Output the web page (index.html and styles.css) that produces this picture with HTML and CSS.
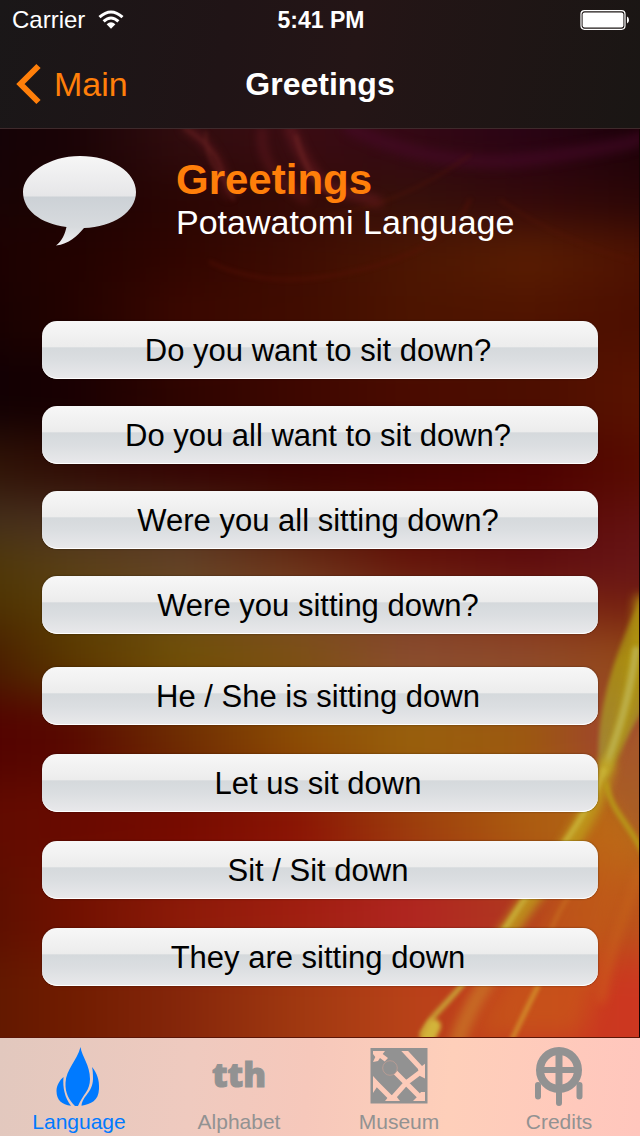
FILE: index.html
```html
<!DOCTYPE html>
<html lang="en">
<head>
<meta charset="utf-8">
<meta name="viewport" content="width=device-width, initial-scale=1">
<title>Greetings</title>
<link rel="stylesheet" href="styles.css">
</head>
<body>
<div class="app">
  <svg class="backdrop" viewBox="0 0 640 1136" preserveAspectRatio="none" aria-hidden="true">
    <defs>
      <filter id="rows" x="0" y="0" width="1" height="1" color-interpolation-filters="sRGB"><feGaussianBlur stdDeviation="14 22"/></filter>
      <filter id="b2" filterUnits="userSpaceOnUse" x="-40" y="-40" width="720" height="1216" color-interpolation-filters="sRGB"><feGaussianBlur stdDeviation="2"/></filter>
      <filter id="b4" filterUnits="userSpaceOnUse" x="-40" y="-40" width="720" height="1216" color-interpolation-filters="sRGB"><feGaussianBlur stdDeviation="5"/></filter>
      <filter id="b12" filterUnits="userSpaceOnUse" x="-40" y="-40" width="720" height="1216" color-interpolation-filters="sRGB"><feGaussianBlur stdDeviation="12"/></filter>
      <linearGradient id="r1"><stop offset="0" stop-color="#120307"/><stop offset=".16" stop-color="#1a0306"/><stop offset=".31" stop-color="#300c0e"/><stop offset=".47" stop-color="#3a0c12"/><stop offset=".62" stop-color="#340814"/><stop offset=".78" stop-color="#2a0414"/><stop offset="1" stop-color="#180004"/></linearGradient>
      <linearGradient id="r2"><stop offset="0" stop-color="#160304"/><stop offset=".16" stop-color="#1c0303"/><stop offset=".31" stop-color="#2a0503"/><stop offset=".47" stop-color="#330a06"/><stop offset=".62" stop-color="#35100a"/><stop offset=".78" stop-color="#32080a"/><stop offset="1" stop-color="#270505"/></linearGradient>
      <linearGradient id="r3"><stop offset="0" stop-color="#1a0102"/><stop offset=".16" stop-color="#220200"/><stop offset=".31" stop-color="#300500"/><stop offset=".47" stop-color="#3e0c02"/><stop offset=".62" stop-color="#4c1602"/><stop offset=".78" stop-color="#5a1e02"/><stop offset="1" stop-color="#4a0e02"/></linearGradient>
      <linearGradient id="r4"><stop offset="0" stop-color="#140102"/><stop offset=".16" stop-color="#220200"/><stop offset=".31" stop-color="#3a0700"/><stop offset=".47" stop-color="#400c00"/><stop offset=".62" stop-color="#4c1400"/><stop offset=".78" stop-color="#501400"/><stop offset="1" stop-color="#4a0c00"/></linearGradient>
      <linearGradient id="r5"><stop offset="0" stop-color="#0d0003"/><stop offset=".16" stop-color="#180002"/><stop offset=".31" stop-color="#2e0400"/><stop offset=".47" stop-color="#3e0700"/><stop offset=".62" stop-color="#4a0b00"/><stop offset=".78" stop-color="#4c0e00"/><stop offset="1" stop-color="#5e1400"/></linearGradient>
      <linearGradient id="r6"><stop offset="0" stop-color="#301808"/><stop offset=".16" stop-color="#300c04"/><stop offset=".31" stop-color="#340202"/><stop offset=".47" stop-color="#380000"/><stop offset=".62" stop-color="#400000"/><stop offset=".78" stop-color="#4a0000"/><stop offset="1" stop-color="#5e1000"/></linearGradient>
      <linearGradient id="r7"><stop offset="0" stop-color="#42301c"/><stop offset=".16" stop-color="#4a3020"/><stop offset=".31" stop-color="#50301a"/><stop offset=".47" stop-color="#4c1808"/><stop offset=".62" stop-color="#580c04"/><stop offset=".78" stop-color="#5a0804"/><stop offset="1" stop-color="#661414"/></linearGradient>
      <linearGradient id="r8"><stop offset="0" stop-color="#4a3400"/><stop offset=".16" stop-color="#5a4018"/><stop offset=".31" stop-color="#64432a"/><stop offset=".47" stop-color="#6c3018"/><stop offset=".62" stop-color="#66140a"/><stop offset=".78" stop-color="#5e0c10"/><stop offset="1" stop-color="#6c1a1a"/></linearGradient>
      <linearGradient id="r9"><stop offset="0" stop-color="#482c00"/><stop offset=".16" stop-color="#5a3e04"/><stop offset=".31" stop-color="#6a4a18"/><stop offset=".47" stop-color="#7a4a28"/><stop offset=".62" stop-color="#7a3c20"/><stop offset=".78" stop-color="#802c10"/><stop offset="1" stop-color="#701810"/></linearGradient>
      <linearGradient id="r10"><stop offset="0" stop-color="#401000"/><stop offset=".16" stop-color="#5a3800"/><stop offset=".31" stop-color="#705006"/><stop offset=".47" stop-color="#7c5014"/><stop offset=".62" stop-color="#8a4c30"/><stop offset=".78" stop-color="#8e4a2c"/><stop offset="1" stop-color="#98480c"/></linearGradient>
      <linearGradient id="r11"><stop offset="0" stop-color="#500000"/><stop offset=".16" stop-color="#580800"/><stop offset=".31" stop-color="#6e2c02"/><stop offset=".47" stop-color="#8c4c04"/><stop offset=".62" stop-color="#98600c"/><stop offset=".78" stop-color="#9c5810"/><stop offset=".92" stop-color="#a04034"/><stop offset="1" stop-color="#8c6030"/></linearGradient>
      <linearGradient id="r12"><stop offset="0" stop-color="#5e0c00"/><stop offset=".16" stop-color="#680a00"/><stop offset=".31" stop-color="#760a00"/><stop offset=".47" stop-color="#8a1404"/><stop offset=".62" stop-color="#9c3c0c"/><stop offset=".78" stop-color="#ac5c10"/><stop offset="1" stop-color="#b87020"/></linearGradient>
      <linearGradient id="r13"><stop offset="0" stop-color="#520f00"/><stop offset=".16" stop-color="#701000"/><stop offset=".31" stop-color="#8c1a08"/><stop offset=".47" stop-color="#a01e10"/><stop offset=".62" stop-color="#b02420"/><stop offset=".78" stop-color="#b03820"/><stop offset="1" stop-color="#c06018"/></linearGradient>
      <linearGradient id="r14"><stop offset="0" stop-color="#5a1600"/><stop offset=".16" stop-color="#701c00"/><stop offset=".31" stop-color="#85260a"/><stop offset=".47" stop-color="#a03810"/><stop offset=".62" stop-color="#b84218"/><stop offset=".78" stop-color="#c63c20"/><stop offset="1" stop-color="#d03420"/></linearGradient>
      <linearGradient id="tongue" x1="0" y1="0" x2="0" y2="1"><stop offset="0" stop-color="#8a5a10" stop-opacity=".7"/><stop offset=".45" stop-color="#a88a14"/><stop offset="1" stop-color="#a08040"/></linearGradient>
    </defs>
    <g filter="url(#rows)">
      <rect x="-50" y="-50" width="740" height="225" fill="url(#r1)"/>
      <rect x="-50" y="170" width="740" height="60" fill="url(#r2)"/>
      <rect x="-50" y="228" width="740" height="56" fill="url(#r3)"/>
      <rect x="-50" y="282" width="740" height="72" fill="url(#r4)"/>
      <rect x="-50" y="352" width="740" height="85" fill="url(#r5)"/>
      <rect x="-50" y="435" width="740" height="64" fill="url(#r6)"/>
      <rect x="-50" y="497" width="740" height="47" fill="url(#r7)"/>
      <rect x="-50" y="542" width="740" height="48" fill="url(#r8)"/>
      <rect x="-50" y="588" width="740" height="44" fill="url(#r9)"/>
      <rect x="-50" y="630" width="740" height="66" fill="url(#r10)"/>
      <rect x="-50" y="694" width="740" height="90" fill="url(#r11)"/>
      <rect x="-50" y="782" width="740" height="87" fill="url(#r12)"/>
      <rect x="-50" y="867" width="740" height="90" fill="url(#r13)"/>
      <rect x="-50" y="955" width="740" height="240" fill="url(#r14)"/>
    </g>
    <g fill="none" stroke-linecap="round">
      <g filter="url(#b4)" stroke="#7a2028" opacity=".5">
        <path d="M186 128q36 22 42 66" stroke-width="7"/>
        <path d="M290 128q22 56 46 62t42 12" stroke-width="10"/>
        <path d="M350 128q90 44 190 30t100-20" stroke="#4a0a2c" stroke-width="14"/>
        <path d="M262 130q-4 40 44 70" stroke-width="6"/>
      </g>
      <g filter="url(#b2)" stroke="#7c2c28" opacity=".55">
        <path d="M184 128q30 18 36 38t14 34" stroke-width="2"/>
        <path d="M206 132q-2 36 34 62" stroke-width="2"/>
        <path d="M296 136q14 52 38 58" stroke-width="3"/>
        <path d="M330 215q70-10 140-60M500 200q60 40 130 60" stroke="#5a1808" stroke-width="2"/>
        <path d="M210 262q60 30 150 8t110-70" stroke="#5a1206" stroke-width="3"/>
      </g>
    </g>
    <path d="M660 560C618 640 603 690 599 735C597 760 600 775 605 785C618 760 632 720 660 690Z" fill="url(#tongue)" filter="url(#b2)"/>
    <path d="M660 690C632 730 612 770 608 792C615 812 628 826 660 856Z" fill="#a85c28" opacity=".8" filter="url(#b4)"/>
    <path d="M604 784C580 850 530 930 470 1037H580C600 980 630 900 640 850C622 826 610 808 604 784Z" fill="#c86a14" opacity=".45" filter="url(#b12)"/>
    <g fill="none" stroke-linecap="round">
      <path d="M640 600C636 660 632 710 608 765" stroke="#b8a010" stroke-width="12" opacity=".7" filter="url(#b4)"/>
      <path d="M636 650C628 710 612 748 604 772" stroke="#bcae48" stroke-width="7" filter="url(#b2)"/>
      <path d="M606 768C598 800 574 842 542 884S505 940 478 972" stroke="#c0a01c" stroke-width="18" opacity=".8" filter="url(#b4)"/>
      <path d="M604 770C594 802 570 836 538 880S500 940 470 976S434 1012 422 1034" stroke="#ccb83c" stroke-width="5" opacity=".85" filter="url(#b2)"/>
      <path d="M494 970C478 996 466 1014 458 1040" stroke="#ca7a28" stroke-width="16" opacity=".7" filter="url(#b4)"/>
      <path d="M434 1026L422 1050" stroke="#d2b43a" stroke-width="14" filter="url(#b2)"/>
      <path d="M606 784C612 812 624 816 644 854" stroke="#b89a18" stroke-width="5" filter="url(#b2)"/>
      <path d="M538 986Q524 1014 508 1048" stroke="#d4922c" stroke-width="4" filter="url(#b2)"/>
      <path d="M640 870C624 920 608 950 602 1000" stroke="#d0701c" stroke-width="6" opacity=".5" filter="url(#b4)"/>
      <path d="M572 892Q558 910 548 938" stroke="#cc7a24" stroke-width="4" opacity=".5" filter="url(#b2)"/>
    </g>
    <rect x="639" y="128" width="1" height="910" fill="#140404"/>
  </svg>

  <header class="topbar">
    <div class="status">
      <div class="status-left">
        <span>Carrier</span>
        <svg class="wifi" viewBox="0 0 26 20" aria-hidden="true"><g fill="none" stroke="#fff" stroke-width="3"><path d="M1.5 7.2Q13-3.2 24.500 7.200"/><path d="M5.600 11.400Q13 4.600 20.400 11.400"/></g><path d="M8.600 14.200Q13 10.400 17.400 14.200L13 18.800Z" fill="#fff"/></svg>
      </div>
      <span class="clock">5:41 PM</span>
      <div class="status-right">
        <svg class="battery" viewBox="0 0 50 20" role="img" aria-label="Battery full"><rect x="1" y=".7" width="44" height="18.600" rx="3.500" fill="none" stroke="#fff" stroke-width="1.200"/><rect x="2.600" y="2.400" width="40.800" height="15.200" rx="2" fill="#fff"/><path d="M47 6.500q2 .5 2 3.500t-2 3.500z" fill="#fff"/></svg>
      </div>
    </div>
    <nav class="navbar">
      <a class="back" href="#main">
        <svg class="chevron" viewBox="0 0 26 42" aria-hidden="true"><path d="M22.500 3L4.500 21l18 18" fill="none" stroke="#ff7f0a" stroke-width="6"/></svg>
        <span>Main</span>
      </a>
      <span class="nav-title">Greetings</span>
    </nav>
  </header>

  <main class="content">
    <section class="intro">
      <svg class="bubble" viewBox="0 0 114 90" aria-hidden="true">
        <defs><linearGradient id="gloss" x1="0" y1="0" x2="0" y2="1"><stop offset="0" stop-color="#f6f6f6"/><stop offset=".45" stop-color="#e6e6e8"/><stop offset=".455" stop-color="#ccd1d6"/><stop offset=".8" stop-color="#d8dbde"/><stop offset="1" stop-color="#f0f0f2"/></linearGradient></defs>
        <path d="M57 0C88.500 0 113 16 113 36S90 71 61 72C54 80 46 88 33 89.500C39 85 42 78 43.500 71C17 67.500 0 54 0 36S25.500 0 57 0Z" fill="url(#gloss)"/>
      </svg>
      <div class="intro-text">
        <h1>Greetings</h1>
        <p>Potawatomi Language</p>
      </div>
    </section>
    <section class="phrases">
      <ul class="phrase-list">
        <li><button class="phrase" type="button">Do you want to sit down?</button></li>
        <li><button class="phrase" type="button">Do you all want to sit down?</button></li>
        <li><button class="phrase" type="button">Were you all sitting down?</button></li>
        <li><button class="phrase" type="button">Were you sitting down?</button></li>
      </ul>
      <ul class="phrase-list loose">
        <li><button class="phrase" type="button">He / She is sitting down</button></li>
        <li><button class="phrase" type="button">Let us sit down</button></li>
        <li><button class="phrase" type="button">Sit / Sit down</button></li>
        <li><button class="phrase" type="button">They are sitting down</button></li>
      </ul>
    </section>
  </main>

  <nav class="tabbar" aria-label="Sections">
    <a class="tab active" href="#language" aria-current="page">
      <svg class="tab-icon" viewBox="0 0 60 60" aria-hidden="true"><g fill="currentColor"><path d="M31.500 0C33 10 41 18 41 32C41 44 34 47 29 59H26C20 53 16 46 16.500 36C17 22 28 14 31.500 0Z"/><path d="M14.500 30C13.500 41 16 51 22 58.700C13 58 7.500 53 7.500 44C7.500 38 11 33 14.500 30Z"/><path d="M43 20C48 26 50.500 33 50 42C49.500 54 42 57 32.500 58.700C34 48 43.500 46 44 32C44 27 43.800 23 43 20Z"/></g></svg>
      <span>Language</span>
    </a>
    <a class="tab" href="#alphabet">
      <span class="tab-icon glyphs" aria-hidden="true">tth</span>
      <span>Alphabet</span>
    </a>
    <a class="tab" href="#museum">
      <svg class="tab-icon" viewBox="0 0 60 60" aria-hidden="true"><path d="M1.500 1h57v55.500h-57z" fill="currentColor"/><svg x="4" y="4" width="52" height="50" viewBox="4 4 52 50"><g fill="none" stroke="#fdcbb9" stroke-width="5"><path d="M32 0L58 28M53 24L37 36L22 53M22 21L58 57M2 31L24 53"/></g><g fill="#fdcbb9"><path d="M4 4H16L13.700 7L19 11L15.700 14.500L11 11L9 14L4 15L6.300 10L4 7Z"/><path d="M57 16V32L51 29L49 22Z"/><path d="M16 54H31L27 49H20Z"/><path d="M4 29V46L8 40L11 37Z"/><path d="M57 45V54H44L48 50L52 45Z"/></g></svg><circle cx="21" cy="21" r="7.300" fill="currentColor" stroke="#b79c94" stroke-width="1"/></svg>
      <span>Museum</span>
    </a>
    <a class="tab" href="#credits">
      <svg class="tab-icon" viewBox="0 0 60 60" aria-hidden="true"><g fill="none" stroke="currentColor"><circle cx="30" cy="23" r="19" stroke-width="8"/><path d="M30 4v38" stroke-width="7"/><path d="M11 23h38" stroke-width="6"/><path d="M30 40v16M9 38v11.500M50.500 38v11.500" stroke-width="6" stroke-linecap="round"/></g></svg>
      <span>Credits</span>
    </a>
  </nav>
</div>
</body>
</html>
```
FILE: styles.css
```css
* {
  box-sizing: border-box;
}

body {
  margin: 0;
  font-family: "Liberation Sans", Arial, sans-serif;
  color: #fff;
  background: #2a0402;
}

.app {
  position: relative;
  isolation: isolate;
  display: flex;
  flex-direction: column;
  min-height: 100vh;
}

.backdrop {
  position: absolute;
  inset: 0;
  z-index: -1;
  width: 100%;
  height: 100%;
}

.topbar {
  background: linear-gradient(100deg, #1a1718 0%, #201416 35%, #241516 55%, #1a1614 100%);
  border-bottom: 1px solid #3f2a2c;
}

.status {
  display: grid;
  grid-template-columns: 1fr auto 1fr;
  align-items: center;
  height: 40px;
  padding: 0 10px 0 12px;
  font-size: 24px;
}

.status-left {
  display: flex;
  align-items: center;
  gap: 13px;
}

.wifi {
  width: 26px;
  height: 20px;
}

.clock {
  font-size: 23px;
  font-weight: bold;
}

.status-right {
  display: flex;
  justify-content: flex-end;
}

.battery {
  width: 50px;
  height: 20px;
}

.navbar {
  display: grid;
  grid-template-columns: 1fr auto 1fr;
  align-items: center;
  height: 88px;
  padding: 0 16px;
}

.back {
  display: flex;
  align-items: center;
  gap: 12px;
  font-size: 34px;
  color: #ff7f0a;
  text-decoration: none;
}

.chevron {
  width: 26px;
  height: 42px;
}

.nav-title {
  font-size: 32px;
  font-weight: bold;
}

.content {
  flex: 1;
}

.intro {
  display: flex;
  gap: 39px;
  padding: 27px 23px 0;
}

.bubble {
  flex: none;
  width: 114px;
  height: 90px;
}

.intro-text h1 {
  margin: 0;
  font-size: 42px;
  line-height: 48px;
  color: #ff7f0a;
}

.intro-text p {
  margin: 0;
  font-size: 34px;
  line-height: 36px;
}

.phrases {
  display: flex;
  flex-direction: column;
  gap: 33px;
  padding: 75px 42px 50px;
}

.phrase-list {
  display: flex;
  flex-direction: column;
  gap: 27px;
  margin: 0;
  padding: 0;
  list-style: none;
}

.phrase-list.loose {
  gap: 29px;
}

.phrase {
  display: block;
  width: 100%;
  height: 58px;
  padding: 2px 4px 0 0;
  border: 0;
  border-radius: 15px;
  font: 31px "Liberation Sans", Arial, sans-serif;
  color: #000;
  background: linear-gradient(#f7f7f7, #ececec 45%, #d5d9dc 46%, #dbdee1 68%, #e9e9eb);
  box-shadow: inset 0 -1px 0 #fff, 0 0 2px rgba(0, 0, 0, 0.5);
}

.tabbar {
  display: grid;
  grid-template-columns: repeat(4, 1fr);
  height: 99px;
  padding-top: 9px;
  border-top: 1px solid #5c1608;
  background: linear-gradient(95deg, #e2c8be, #efcabf 30%, #f6c8bb 48%, #fecfba 70%, #ffc6bd);
}

.tab {
  display: flex;
  flex-direction: column;
  align-items: center;
  gap: 3px;
  padding-right: 2px;
  font-size: 21px;
  line-height: 24px;
  color: #929292;
  text-decoration: none;
}

.tab.active {
  color: #007aff;
}

.tab-icon {
  width: 60px;
  height: 60px;
}

.glyphs {
  display: flex;
  align-items: center;
  justify-content: center;
  padding-bottom: 6px;
  font-family: "Open Sans", sans-serif;
  font-size: 34px;
  font-weight: 800;
  -webkit-text-stroke: 1px currentColor;
}
```
